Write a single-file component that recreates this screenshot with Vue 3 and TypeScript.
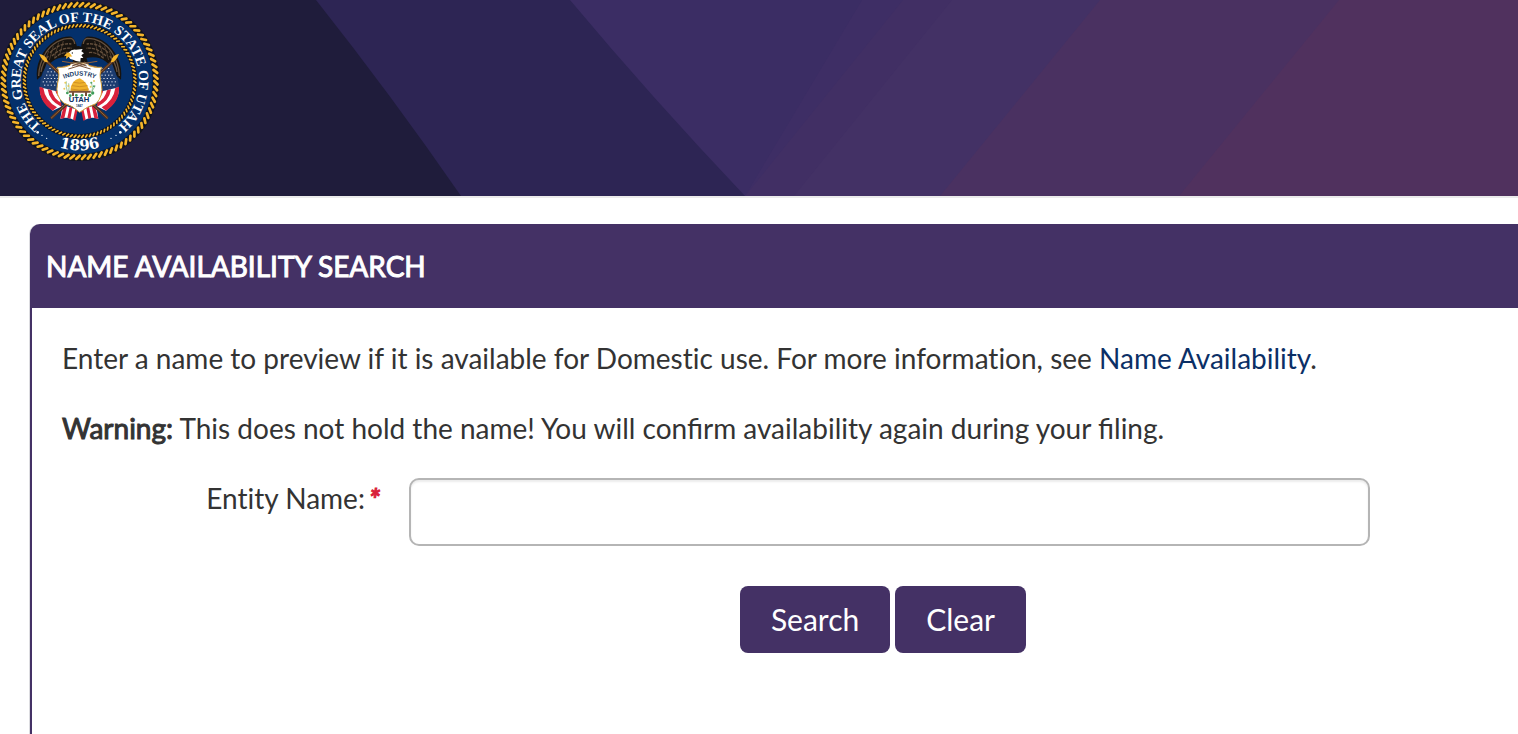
<script setup lang="ts">
import { ref } from 'vue'

interface Strand {
  x1: number
  y1: number
  x2: number
  y2: number
}

const CX = 239
const CY = 243

function rope(count: number, inner: number, outer: number, skew: number): Strand[] {
  return Array.from({ length: count }, (_, i) => {
    const a = (i / count) * Math.PI * 2
    const b = a + skew
    return {
      x1: CX + Math.cos(a) * inner,
      y1: CY + Math.sin(a) * inner,
      x2: CX + Math.cos(b) * outer,
      y2: CY + Math.sin(b) * outer,
    }
  })
}

const outerRope = rope(84, 224, 234, 0.045)
const innerRope = rope(92, 163, 169, 0.03)

const stars: { x: number; y: number }[] = []
for (let row = 0; row < 6; row++) {
  for (let col = 0; col < 5; col++) {
    const x = 168 - col * 10 + (row % 2) * 4
    const y = 204 + row * 10
    if (x > 146 - row * 5) stars.push({ x, y })
  }
}

const entityName = ref('')
function clear(): void {
  entityName.value = ''
}
</script>

<template>
  <div class="page">
    <header class="banner">
      <svg class="banner-art" viewBox="0 0 1518 196" preserveAspectRatio="none" aria-hidden="true">
        <rect width="1518" height="196" fill="#3b2d64" />
        <path d="M862 0H1518V196H700L745 196Z" fill="#3e2e65" />
        <path d="M903 0H1518V196H745Z" fill="#412f64" />
        <path d="M952 0H1518V196H794Z" fill="#433165" />
        <path d="M1100 0H1518V196H940Z" fill="#4a3161" />
        <path d="M1339 0H1518V196H1179Z" fill="#50315e" />
        <path d="M0 0H570Q652 98 745 196H0Z" fill="#2d2554" />
        <path d="M0 0H316Q392 96 461 196H0Z" fill="#1f1c3b" />
      </svg>
      <svg class="seal" viewBox="0 0 480 486" role="img" aria-label="State seal">
        <defs>
          <path id="arc-top" d="M239 421A178 178 0 1 1 240 421" />
          <path id="arc-bottom" d="M31 243A208 208 0 0 0 447 243" />
        </defs>
        <circle :cx="CX" :cy="CY" r="240" fill="#11131a" />
        <g stroke="#f5b52a" stroke-width="8" stroke-linecap="round">
          <line v-for="(s, i) in outerRope" :key="i" v-bind="s" />
        </g>
        <circle :cx="CX" :cy="CY" r="219" fill="#04306b" />
        <circle :cx="CX" :cy="CY" r="166" fill="none" stroke="#11131a" stroke-width="14" />
        <g stroke="#f5b52a" stroke-width="5" stroke-linecap="round">
          <line v-for="(s, i) in innerRope" :key="i" v-bind="s" />
        </g>
        <text class="ring-text">
          <textPath href="#arc-top" startOffset="50%" text-anchor="middle">THE GREAT SEAL OF THE STATE OF UTAH</textPath>
        </text>
        <text class="year-text">
          <textPath href="#arc-bottom" startOffset="50%" text-anchor="middle">1896</textPath>
        </text>
        <g fill="#fff">
          <circle cx="113" cy="397" r="4" /><circle cx="126" cy="406" r="2" /><circle cx="140" cy="415" r="2" />
          <circle cx="361" cy="397" r="4" /><circle cx="348" cy="406" r="2" /><circle cx="333" cy="415" r="2" />
        </g>

        <!-- eagle wings -->
        <g id="wing">
          <path d="M232 182L216 174Q180 166 158 184Q130 204 124 228L111 239Q107 205 120 176Q136 140 165 122Q190 108 214 110Q226 118 230 136Z" fill="#17130f" />
          <g fill="none" stroke="#66513e" stroke-width="4">
            <path d="M116 228Q117 190 139 156Q168 115 213 115Q224 120 224 132" />
            <path d="M123 216Q126 190 145 168" />
            <path d="M150 158Q180 127 214 132M156 168Q184 141 216 145M163 175Q186 154 209 158" stroke-dasharray="10 3" />
            <path d="M135 183L146 153M148 180L160 138M164 170L176 128M179 164L190 123" stroke-width="2" />
          </g>
        </g>
        <use href="#wing" transform="translate(474 0) scale(-1 1)" />
        <path d="M224 142Q238 132 252 146L263 187H218Z" fill="#15120f" />
        <path d="M207 157Q214 147 228 149L248 147L244 154L252 160L244 166L250 174L242 174L241 185L228 183Q219 178 211 177Q204 170 207 157Z" fill="#fff" />
        <path d="M207 157Q197 159 192 169L199 167L198 177Q207 168 217 170L212 163Z" fill="#f5b52a" />
        <circle cx="217" cy="159" r="2" fill="#222" />

        <!-- flag and spear, mirrored on the other side -->
        <g id="flag">
          <path d="M140 190L122 239L119 263L180 281L170 203Z" fill="#1c3c70" />
          <g fill="#d5dbe8">
            <rect v-for="(s, i) in stars" :key="i" :x="s.x" :y="s.y" width="4" height="3" />
          </g>
          <path d="M119 262Q118 301 158 332L184 320L176 275Z" fill="#fff" />
          <path d="M119 260L130 264Q135 302 171 322L158 332Q116 304 119 260ZM143 268L155 271Q161 298 184 308V320Q148 304 143 268ZM166 272L178 275L184 299Q171 289 166 272Z" fill="#d9213b" />
          <path d="M188 314L231 329L224 361Q205 348 181 356Z" fill="#fff" />
          <path d="M192 315L201 318L193 355L181 356ZM209 321L217 324L211 356L202 354ZM226 327L233 329L226 362L219 359Z" fill="#d9213b" />
        </g>
        <use href="#flag" transform="translate(476 0) scale(-1 1)" />
        <g fill="none" stroke="#4f311f" stroke-width="9">
          <path d="M137 181L323 355M341 181L153 355" />
        </g>
        <g fill="none" stroke="#96633a" stroke-width="3">
          <path d="M137 181L323 355M341 181L153 355M186 184L290 200M292 184L188 200" />
        </g>
        <path d="M117 162Q133 164 140 176L144 187L134 185Q123 177 117 162ZM357 162Q342 164 336 176L332 187L342 185Q352 177 357 162Z" fill="#f5b52a" />

        <!-- shield -->
        <path d="M172 202Q195 204 210 196Q213 189 221 189H257Q264 190 267 197Q284 204 305 202Q296 222 304 251Q311 288 288 311Q262 319 239 337Q218 317 191 309Q164 288 173 249Q181 220 172 202Z" fill="#fff" stroke="#d6a13a" stroke-width="3" />
        <path d="M208 188L272 207M269 188L205 207M216 198L255 186M260 198L220 186" stroke="#765035" stroke-width="3" />
        <path id="arc-shield" d="M185 240Q239 213 293 240" fill="none" />
        <text class="motto">
          <textPath href="#arc-shield" startOffset="50%" text-anchor="middle">INDUSTRY</textPath>
        </text>
        <path d="M211 271Q214 240 239 235Q260 244 267 271L258 276H218Z" fill="#efb22d" />
        <path d="M221 247Q239 252 256 247M216 257Q239 263 263 257M213 267Q239 274 266 267" fill="none" stroke="#bf7e20" stroke-width="2" />
        <path d="M207 272H272V278H207ZM216 278H222V288H216ZM255 278H261V288H255Z" fill="#795037" />
        <g fill="#3c9b58">
          <circle cx="202" cy="279" r="4" /><circle cx="211" cy="287" r="4" /><circle cx="229" cy="286" r="4" />
          <circle cx="246" cy="286" r="4" /><circle cx="269" cy="286" r="5" /><circle cx="278" cy="279" r="5" />
          <circle cx="274" cy="248" r="3" /><circle cx="282" cy="259" r="3" />
        </g>
        <g fill="none" stroke="#70ad73" stroke-width="2">
          <path d="M203 278Q196 258 199 244M206 279Q208 260 206 250M274 283Q281 264 274 246M276 274L286 257" />
        </g>
        <g fill="#e9ca57">
          <circle cx="196" cy="248" r="3" /><circle cx="205" cy="258" r="3" /><circle cx="193" cy="266" r="3" />
          <circle cx="282" cy="243" r="3" /><circle cx="272" cy="260" r="3" />
        </g>
        <text class="state" x="237" y="307" text-anchor="middle">UTAH</text>
        <text class="founded" x="238" y="321" text-anchor="middle">1847</text>
      </svg>
    </header>

    <main class="panel">
      <h1 class="panel-title">NAME AVAILABILITY SEARCH</h1>
      <form class="panel-body" @submit.prevent>
        <p class="intro">
          Enter a name to preview if it is available for Domestic use. For more information, see
          <a href="#">Name Availability</a>.
        </p>
        <p><strong>Warning:</strong> This does not hold the name! You will confirm availability again during your filing.</p>
        <div class="field">
          <label for="entity-name">Entity Name:<span class="required">*</span></label>
          <input id="entity-name" v-model="entityName" type="text" required />
        </div>
        <div class="actions">
          <button type="submit">Search</button>
          <button type="button" @click="clear">Clear</button>
        </div>
      </form>
    </main>
  </div>
</template>

<style>
body {
  margin: 0;
  background: #fff;
}
</style>

<style scoped>
.page {
  box-sizing: border-box;
  display: flex;
  flex-direction: column;
  min-height: 100vh;
  overflow: hidden;
  font-family: Lato, "Open Sans", sans-serif;
  font-size: 28px;
  line-height: 40px;
  color: #333;
}

.banner {
  position: relative;
  height: 196px;
  border-bottom: 2px solid #ebebeb;
  background: #1f1c3b;
}

.banner-art {
  position: absolute;
  inset: 0;
  width: 100%;
  height: 100%;
}

.seal {
  position: relative;
  display: block;
  width: 160px;
  height: 162px;
}

.ring-text {
  font: bold 42px "Liberation Serif", serif;
  fill: #fff;
}

.year-text {
  font: bold 45px "DejaVu Serif", serif;
  fill: #fff;
}

.motto {
  font: bold 19px "Liberation Sans", sans-serif;
  fill: #153965;
}

.state {
  font: bold 23px "Liberation Sans", sans-serif;
  fill: #092f62;
}

.founded {
  font: bold 9px "Liberation Sans", sans-serif;
  fill: #092f62;
}

.panel {
  display: flex;
  flex: 1;
  flex-direction: column;
  margin: 26px 0 0 30px;
}

.panel-title {
  margin: 0;
  padding: 22px 16px;
  border-radius: 10px 0 0 0;
  background: #443165;
  box-shadow: -1px 0 0 #dcdce0;
  color: #fff;
  font-size: 28px;
  font-weight: 400;
  line-height: 40px;
  -webkit-text-stroke: 1px #fff;
}

.panel-body {
  flex: 1;
  padding: 30px 0 0 30px;
  border-left: 2px solid #443165;
  box-shadow: -1px 0 0 #dcdce0;
}

p {
  margin: 0 0 30px;
}

.intro,
.field label {
  font-variant-ligatures: no-common-ligatures;
}

a {
  color: #0b2f66;
  text-decoration: none;
}

strong {
  font-weight: 400;
  -webkit-text-stroke: 1px #333;
}

.field {
  display: grid;
  grid-template-columns: 318px 1fr;
  column-gap: 29px;
  margin: 0 148px 40px 0;
}

.field label {
  text-align: right;
}

.required {
  margin-left: 4px;
  color: #d9213b;
  font-weight: 700;
  font-style: italic;
  -webkit-text-stroke: 1px #d9213b;
}

.field input {
  box-sizing: border-box;
  width: 100%;
  height: 68px;
  padding: 12px 24px;
  border: 2px solid #b5b5b5;
  border-radius: 10px;
  background: #fff;
  box-shadow: inset 0 2px 2px rgba(0, 0, 0, 0.08);
  color: #333;
  font: inherit;
  outline: none;
}

.actions {
  display: flex;
  justify-content: center;
  gap: 5px;
  padding-left: 186px;
}

.actions button {
  padding: 13px 31px 14px;
  border: 0;
  border-radius: 8px;
  background: #443165;
  color: #fff;
  font-family: inherit;
  font-size: 30px;
  line-height: 40px;
  cursor: pointer;
}
</style>
